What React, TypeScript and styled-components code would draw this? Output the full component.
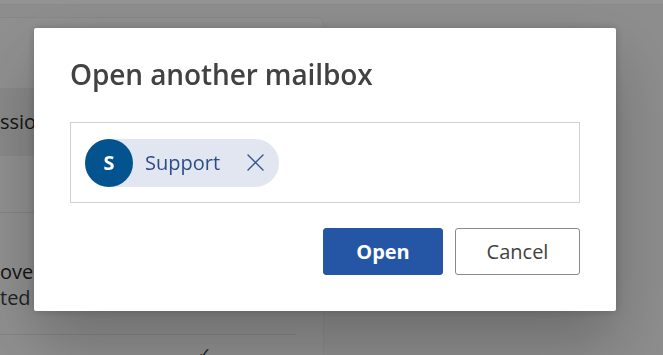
import React from "react";
import styled, { createGlobalStyle } from "styled-components";

const Global = createGlobalStyle`
  html, body { margin: 0; padding: 0; }
  body {
    width: 663px;
    height: 355px;
    overflow: hidden;
    font-family: "Open Sans", "Noto Sans", Arial, sans-serif;
    background: #ececec;
  }
`;

const Page = styled.div`
  width: 663px;
  height: 355px;
  display: flex;
  flex-direction: column;
  background: #ebebeb;
  overflow: hidden;
`;

const TopStrip = styled.div`
  height: 4px;
  background: #f6f6f6;
  border-bottom: 1px solid #e6e6e6;
  flex: none;
`;

const HeaderGap = styled.div`
  height: 12px;
  flex: none;
`;

const Body = styled.div`
  display: flex;
  flex: 1;
`;

const SideCard = styled.div`
  width: 323px;
  background: #efefef;
  border-top: 1px solid #e2e2e2;
  border-right: 1px solid #e2e2e2;
  border-top-right-radius: 8px;
  display: flex;
  flex-direction: column;
`;

const CardHead = styled.div`
  height: 70px;
  flex: none;
`;

const Row = styled.div<{ $tone?: string; $h: number; $line?: boolean }>`
  height: ${(p) => p.$h}px;
  flex: none;
  background: ${(p) => p.$tone || "transparent"};
  border-bottom: ${(p) => (p.$line ? "1px solid #dcdcdc" : "none")};
  display: flex;
  flex-direction: column;
  justify-content: center;
  width: ${(p) => (p.$line ? "296px" : "auto")};
`;

const BgText = styled.div<{ $muted?: boolean; $top?: number }>`
  font-size: 20px;
  line-height: 26px;
  margin-top: ${(p) => p.$top || 0}px;
  color: ${(p) => (p.$muted ? "#3a3a3a" : "#242424")};
  white-space: nowrap;
`;

const CheckRow = styled.div`
  padding: 10px 0 0 198px;
  color: #333333;
  font-size: 16px;
  line-height: 16px;
`;

const Overlay = styled.div`
  position: fixed;
  inset: 0;
  background: rgba(0, 0, 0, 0.4);
  display: flex;
  align-items: flex-start;
  padding: 28px 0 0 34px;
  box-sizing: border-box;
`;

const Dialog = styled.div`
  width: 582px;
  box-sizing: border-box;
  background: #ffffff;
  border-radius: 2px;
  padding: 26px 36px 36px 36px;
  box-shadow: 0 32px 64px rgba(0, 0, 0, 0.24), 0 0 8px rgba(0, 0, 0, 0.2);
  display: flex;
  flex-direction: column;
`;

const Title = styled.h2`
  margin: 0;
  font-size: 28px;
  line-height: 40px;
  font-weight: 600;
  color: #424242;
  letter-spacing: -0.1px;
`;

const PickerBox = styled.div`
  margin-top: 28px;
  height: 81px;
  box-sizing: border-box;
  border: 1px solid #d1d1d1;
  padding: 0 14px;
  display: flex;
  align-items: center;
`;

const Chip = styled.div`
  display: flex;
  align-items: center;
  height: 48px;
  border-radius: 24px;
  background: #e1e6f1;
  padding-right: 8px;
`;

const Avatar = styled.div`
  width: 48px;
  height: 48px;
  border-radius: 50%;
  background: #03538f;
  color: #ffffff;
  font-size: 20px;
  font-weight: 700;
  display: flex;
  align-items: center;
  justify-content: center;
`;

const ChipName = styled.span`
  margin-left: 12px;
  font-size: 20px;
  color: #2d4d86;
`;

const RemoveButton = styled.button`
  margin-left: 19px;
  width: 32px;
  height: 32px;
  border: none;
  background: transparent;
  padding: 0;
  display: flex;
  align-items: center;
  justify-content: center;
  color: #33548c;
  cursor: pointer;
`;

const Actions = styled.div`
  margin-top: 25px;
  display: flex;
  justify-content: flex-end;
  gap: 12px;
`;

const Button = styled.button<{ $primary?: boolean; $w: number }>`
  width: ${(p) => p.$w}px;
  height: 47px;
  border-radius: 3px;
  font-family: "Open Sans", "Noto Sans", Arial, sans-serif;
  font-size: 20px;
  font-weight: ${(p) => (p.$primary ? 700 : 400)};
  background: ${(p) => (p.$primary ? "#2456a5" : "#ffffff")};
  color: ${(p) => (p.$primary ? "#ffffff" : "#424242")};
  border: 1px solid ${(p) => (p.$primary ? "#2456a5" : "#8a8a8a")};
  padding: 0;
  cursor: pointer;
`;

const Dismiss = () => (
  <svg width="17" height="17" viewBox="0 0 17 17" fill="none">
    <path d="M1 1 L16 16 M16 1 L1 16" stroke="currentColor" strokeWidth="1.4" strokeLinecap="round" />
  </svg>
);

export default function App() {
  return (
    <>
      <Global />
      <Page>
        <TopStrip />
        <HeaderGap />
        <Body>
          <SideCard>
            <CardHead />
            <Row $h={68} $tone="#e3e3e3">
              <BgText>ssions</BgText>
            </Row>
            <Row $h={56} $line />
            <Row $h={121} $line>
              <BgText $top={22}>overview</BgText>
              <BgText $muted>ted mailbox</BgText>
            </Row>
            <CheckRow>✓</CheckRow>
          </SideCard>
        </Body>
      </Page>
      <Overlay>
        <Dialog role="dialog" aria-label="Open another mailbox">
          <Title>Open another mailbox</Title>
          <PickerBox>
            <Chip>
              <Avatar>S</Avatar>
              <ChipName>Support</ChipName>
              <RemoveButton aria-label="Remove Support">
                <Dismiss />
              </RemoveButton>
            </Chip>
          </PickerBox>
          <Actions>
            <Button $primary $w={120}>Open</Button>
            <Button $w={125}>Cancel</Button>
          </Actions>
        </Dialog>
      </Overlay>
    </>
  );
}
